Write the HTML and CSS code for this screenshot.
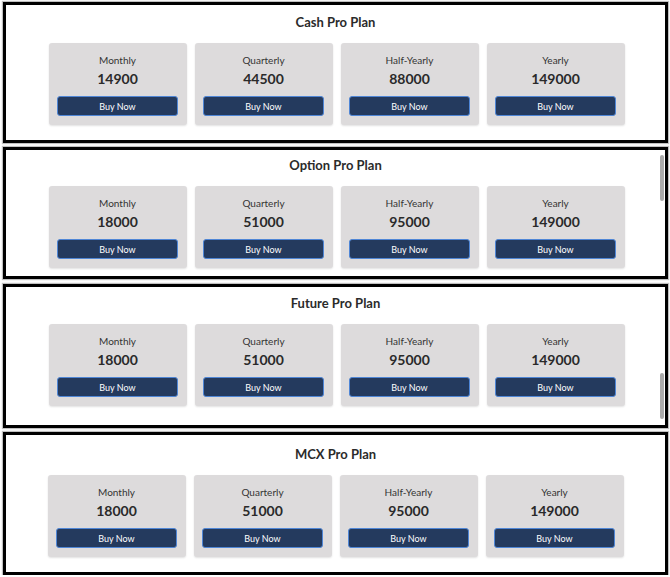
FILE: index.html
```html
<!DOCTYPE html>
<html lang="en">
<head>
<meta charset="utf-8">
<title>Pro Plans</title>
<link rel="stylesheet" href="styles.css">
</head>
<body>
<section class="panel panel-cash">
  <h2 class="plan-title">Cash Pro Plan</h2>
  <div class="cards">
    <div class="card"><div class="period">Monthly</div><div class="price">14900</div><button class="buy">Buy Now</button></div>
    <div class="card"><div class="period">Quarterly</div><div class="price">44500</div><button class="buy">Buy Now</button></div>
    <div class="card"><div class="period">Half-Yearly</div><div class="price">88000</div><button class="buy">Buy Now</button></div>
    <div class="card"><div class="period">Yearly</div><div class="price">149000</div><button class="buy">Buy Now</button></div>
  </div>
</section>
<section class="panel panel-option">
  <h2 class="plan-title">Option Pro Plan</h2>
  <div class="cards">
    <div class="card"><div class="period">Monthly</div><div class="price">18000</div><button class="buy">Buy Now</button></div>
    <div class="card"><div class="period">Quarterly</div><div class="price">51000</div><button class="buy">Buy Now</button></div>
    <div class="card"><div class="period">Half-Yearly</div><div class="price">95000</div><button class="buy">Buy Now</button></div>
    <div class="card"><div class="period">Yearly</div><div class="price">149000</div><button class="buy">Buy Now</button></div>
  </div>
  <div class="scrollbar scrollbar-top"></div>
</section>
<section class="panel panel-future">
  <h2 class="plan-title">Future Pro Plan</h2>
  <div class="cards">
    <div class="card"><div class="period">Monthly</div><div class="price">18000</div><button class="buy">Buy Now</button></div>
    <div class="card"><div class="period">Quarterly</div><div class="price">51000</div><button class="buy">Buy Now</button></div>
    <div class="card"><div class="period">Half-Yearly</div><div class="price">95000</div><button class="buy">Buy Now</button></div>
    <div class="card"><div class="period">Yearly</div><div class="price">149000</div><button class="buy">Buy Now</button></div>
  </div>
  <div class="scrollbar scrollbar-bottom"></div>
</section>
<section class="panel panel-mcx">
  <h2 class="plan-title">MCX Pro Plan</h2>
  <div class="cards">
    <div class="card"><div class="period">Monthly</div><div class="price">18000</div><button class="buy">Buy Now</button></div>
    <div class="card"><div class="period">Quarterly</div><div class="price">51000</div><button class="buy">Buy Now</button></div>
    <div class="card"><div class="period">Half-Yearly</div><div class="price">95000</div><button class="buy">Buy Now</button></div>
    <div class="card"><div class="period">Yearly</div><div class="price">149000</div><button class="buy">Buy Now</button></div>
  </div>
</section>
</body>
</html>
```
FILE: styles.css
```css
html, body {
  margin: 0;
  background: #ffffff;
}
body {
  padding: 2px 2px 0 3px;
  font-family: Lato, "Open Sans", "Liberation Sans", sans-serif;
  color: #333333;
}
.panel {
  position: relative;
  border: 3px solid #000000;
  box-shadow: 0 0 1px 1px rgba(0, 0, 0, 0.25);
  background: #ffffff;
  display: flex;
  flex-direction: column;
  align-items: center;
}
.panel-cash { padding: 8px 0 15px; margin-bottom: 4px; }
.panel-option { padding: 6px 0 8px; margin-bottom: 5px; }
.panel-future { padding: 7px 0 19px; margin-bottom: 4px; }
.panel-mcx { padding: 10px 0 15px; }
.plan-title {
  margin: 0 0 12px;
  font-size: 13px;
  line-height: 18px;
  font-weight: 700;
  color: #2b2b2b;
}
.cards {
  display: flex;
  gap: 8px;
  margin-left: 2px;
}
.panel-mcx .cards { margin-left: 0; }
.card {
  width: 138px;
  box-sizing: border-box;
  padding: 10px 8px 9px;
  background: #dddbdc;
  border-radius: 3px;
  box-shadow: 0 1px 2px rgba(0, 0, 0, 0.12);
  display: flex;
  flex-direction: column;
  align-items: center;
}
.period {
  font-size: 10px;
  line-height: 14px;
  color: #333333;
}
.price {
  margin-top: 2px;
  font-size: 14px;
  line-height: 20px;
  font-weight: 700;
  color: #2a2a2a;
}
.buy {
  margin-top: 7px;
  width: 121px;
  height: 20px;
  box-sizing: border-box;
  background: #243a5e;
  border: 1px solid #4f86d6;
  border-radius: 3px;
  color: #ffffff;
  font-family: Lato, "Open Sans", "Liberation Sans", sans-serif;
  font-size: 9px;
  padding: 0;
}
.scrollbar {
  position: absolute;
  right: 1px;
  width: 4px;
  height: 46px;
  border-radius: 2px;
  background: #a9a9a9;
}
.scrollbar-top { top: 5px; }
.scrollbar-bottom { top: 86px; }
```
